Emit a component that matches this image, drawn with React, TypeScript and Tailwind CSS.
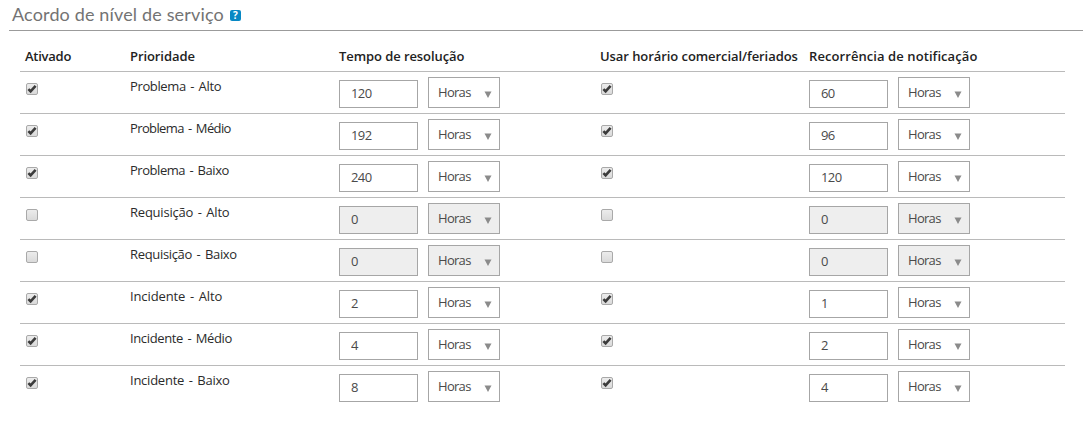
import { useState } from "react";

type Sla = {
  name: string;
  tracking: string;
  active: boolean;
  resolution: string;
  recurrence: string;
};

const INITIAL: Sla[] = [
  { name: "Problema - Alto", tracking: "tracking-[-0.37px]", active: true, resolution: "120", recurrence: "60" },
  { name: "Problema - Médio", tracking: "tracking-[-0.62px]", active: true, resolution: "192", recurrence: "96" },
  { name: "Problema - Baixo", tracking: "tracking-[-0.46px]", active: true, resolution: "240", recurrence: "120" },
  { name: "Requisição - Alto", tracking: "tracking-[-0.22px]", active: false, resolution: "0", recurrence: "0" },
  { name: "Requisição - Baixo", tracking: "tracking-[-0.33px]", active: false, resolution: "0", recurrence: "0" },
  { name: "Incidente - Alto", tracking: "tracking-[-0.12px]", active: true, resolution: "2", recurrence: "1" },
  { name: "Incidente - Médio", tracking: "tracking-[-0.37px]", active: true, resolution: "4", recurrence: "2" },
  { name: "Incidente - Baixo", tracking: "tracking-[-0.24px]", active: true, resolution: "8", recurrence: "4" },
];

const GRID = "grid grid-cols-[105px_209px_261px_209px_261px] border-[#bababa]";

function Checkbox({ checked, onChange }: { checked: boolean; onChange?: () => void }) {
  return (
    <button
      type="button"
      role="checkbox"
      aria-checked={checked}
      onClick={onChange}
      className="mt-[11px] ml-[6px] block size-3 rounded-[2px] border border-[#a9a9a9] bg-linear-to-b from-[#ececec] to-[#dadada]"
    >
      {checked && (
        <svg viewBox="0 0 10 10" className="block size-[10px]">
          <path d="M1.4 5.2 3.6 7.4 8.6 1.8" fill="none" stroke="#3c3c3c" strokeWidth="2.6" />
        </svg>
      )}
    </button>
  );
}

function Duration({ value, disabled }: { value: string; disabled: boolean }) {
  const bg = disabled ? "bg-[#eeeeee]" : "bg-white";

  return (
    <div className="flex items-end gap-[10px] self-start pt-[5px] pl-[5px] text-[#4a4a4a]">
      <input
        defaultValue={value}
        disabled={disabled}
        className={`h-[28px] w-[79px] border border-[#a6a6a6] pb-[3px] pl-[11px] text-[13px] tracking-[-0.6px] outline-none ${bg}`}
      />
      <button
        type="button"
        disabled={disabled}
        className={`flex h-[31px] w-[72px] items-center justify-between border border-[#a6a6a6] pr-[7px] pl-[9px] text-[13px] ${bg}`}
      >
        <span className="tracking-[-0.7px]">Horas</span>
        <svg viewBox="0 0 8 7" className="mt-[3px] h-[7px] w-2">
          <path d="M0.5 0.5h7L4 7z" fill="#8b8b8b" />
        </svg>
      </button>
    </div>
  );
}

export default function App() {
  const [rows, setRows] = useState(INITIAL);

  const toggle = (index: number) =>
    setRows((prev) => prev.map((row, i) => (i === index ? { ...row, active: !row.active } : row)));

  return (
    <main className="h-[426px] w-[1090px] overflow-hidden bg-white pl-[9px] font-['Open_Sans','Noto_Sans',sans-serif] text-[13px] text-[#2b2b2b]">
      <header className="flex h-[31px] w-[1074px] items-center border-b border-[#9b9b9b] pl-[3px]">
        <h1 className="pb-px font-['Lato',sans-serif] text-[18px] leading-[29px] tracking-[0.15px] text-[#737373]">
          Acordo de nível de serviço
        </h1>
        <span className="ml-[6px] flex size-[11px] items-center justify-center rounded-[2px] bg-[#0788c4] text-[10px] leading-none font-bold text-white">
          ?
        </span>
      </header>

      <section className="ml-[11px] w-[1045px]">
        <div className={`${GRID} h-[41px] border-b pt-[15px] leading-5 font-semibold whitespace-nowrap text-[#222222]`}>
          <div className="pl-[5px] tracking-[-0.25px]">Ativado</div>
          <div className="pl-[5px] tracking-[-0.08px]">Prioridade</div>
          <div className="pl-[5px] tracking-[-0.08px]">Tempo de resolução</div>
          <div className="pl-[5px] tracking-[-0.07px]">Usar horário comercial/feriados</div>
          <div className="pl-[5px] tracking-[0.08px]">Recorrência de notificação</div>
        </div>

        {rows.map((row, i) => (
          <div key={row.name} className={`${GRID} h-[42px] border-b last:border-b-0`}>
            <div>
              <Checkbox checked={row.active} onChange={() => toggle(i)} />
            </div>
            <div className={`pt-1 pl-[5px] leading-5 [word-spacing:1.5px] ${row.tracking}`}>{row.name}</div>
            <Duration value={row.resolution} disabled={!row.active} />
            <div>
              <Checkbox checked={row.active} />
            </div>
            <Duration value={row.recurrence} disabled={!row.active} />
          </div>
        ))}
      </section>
    </main>
  );
}
